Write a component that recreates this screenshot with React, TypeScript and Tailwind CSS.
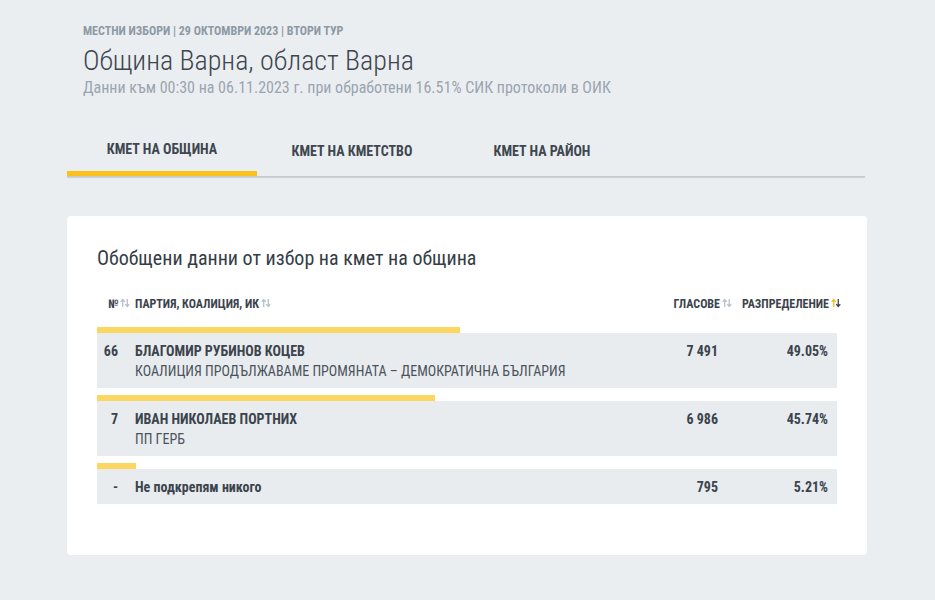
import React from "react";

const font = { fontFamily: "'Roboto Condensed', 'Liberation Sans Narrow', 'DejaVu Sans Condensed', Roboto, sans-serif" };

function Arrows({ active }: { active?: boolean }) {
  const up = active ? "#f4bd1a" : "#b7c0c8";
  const down = active ? "#3a434c" : "#b7c0c8";
  return (
    <svg width="10" height="10" viewBox="0 0 11 10" className="inline-block ml-[2px] align-[0px]">
      <path d="M3 9.5V1.5M0.8 3.8L3 1.2L5.2 3.8" stroke={up} strokeWidth="1.4" fill="none" />
      <path d="M8 0.5V8.5M5.8 6.2L8 8.8L10.2 6.2" stroke={down} strokeWidth="1.4" fill="none" />
    </svg>
  );
}

const rows = [
  { n: "66", name: "БЛАГОМИР РУБИНОВ КОЦЕВ", party: "КОАЛИЦИЯ ПРОДЪЛЖАВАМЕ ПРОМЯНАТА – ДЕМОКРАТИЧНА БЪЛГАРИЯ", votes: "7 491", pct: 49.05 },
  { n: "7", name: "ИВАН НИКОЛАЕВ ПОРТНИХ", party: "ПП ГЕРБ", votes: "6 986", pct: 45.74 },
  { n: "-", name: "Не подкрепям никого", party: "", votes: "795", pct: 5.21 },
];

export default function App() {
  return (
    <div className="min-h-[600px] bg-[#ebeef1] text-[#3b444d]" style={font}>
      <div className="w-[800px] ml-[67px] pt-[23px]">
        <div className="pl-[16px]">
          <div className="text-[12px] leading-[16px] font-bold text-[#8d99a4]">МЕСТНИ ИЗБОРИ | 29 ОКТОМВРИ 2023 | ВТОРИ ТУР</div>
          <h1 className="text-[28px] leading-[34px] font-light text-[#3d464f] mt-[5px]">Община Варна, област Варна</h1>
          <div className="text-[16px] leading-[20px] text-[#9aa5af]">Данни към 00:30 на 06.11.2023 г. при обработени 16.51% СИК протоколи в ОИК</div>
        </div>
        <div className="mt-[29px] w-[798px]">
          <div className="flex">
            <div className="w-[190px] h-[49px] flex items-center justify-center text-[14px] font-bold text-[#3e474f] border-b-[5px] border-[#fcc21b]">КМЕТ НА ОБЩИНА</div>
            <div className="w-[190px] h-[49px] flex items-center justify-center text-[14px] font-bold text-[#3e474f]">КМЕТ НА КМЕТСТВО</div>
            <div className="w-[190px] h-[49px] flex items-center justify-center text-[14px] font-bold text-[#3e474f]">КМЕТ НА РАЙОН</div>
          </div>
          <div className="h-[1px] bg-[#c3c9ce] shadow-[0_1px_1px_rgba(0,0,0,0.15)]" />
        </div>
        <div className="mt-[39px] bg-white rounded-[4px] px-[30px] pt-[28px] pb-[51px]">
          <h2 className="text-[20px] leading-[28px] text-[#353d45]">Обобщени данни от избор на кмет на община</h2>
          <div className="mt-[17px] flex items-center h-[30px] text-[12px] font-bold text-[#3b444d]">
            <div className="w-[38px] pl-[11px] whitespace-nowrap">№<Arrows /></div>
            <div className="flex-1 whitespace-nowrap">ПАРТИЯ, КОАЛИЦИЯ, ИК<Arrows /></div>
            <div className="w-[120px] pr-[3px] text-right whitespace-nowrap">ГЛАСОВЕ<Arrows /></div>
            <div className="w-[106px] text-right -mr-[4px] whitespace-nowrap">РАЗПРЕДЕЛЕНИЕ<Arrows active /></div>
          </div>
          <div className="mt-[8px] flex flex-col gap-[7px]">
            {rows.map((r) => (
              <div key={r.n}>
                <div className="h-[6px] bg-[#fbd660]" style={{ width: `${r.pct}%` }} />
                <div className="bg-[#e9ecef] flex pt-[8px] pb-[7px] text-[14px] leading-[20px]">
                  <div className="w-[30px] pr-[9px] text-right font-bold shrink-0">{r.n}</div>
                  <div className="flex-1 pl-[8px]">
                    <div className="font-bold">{r.name}</div>
                    {r.party && <div className="text-[#4a535c]">{r.party}</div>}
                  </div>
                  <div className="w-[120px] text-right pr-[13px] font-bold">{r.votes}</div>
                  <div className="w-[106px] text-right pr-[9px] font-bold">{r.pct.toFixed(2)}%</div>
                </div>
              </div>
            ))}
          </div>
        </div>
      </div>
    </div>
  );
}
